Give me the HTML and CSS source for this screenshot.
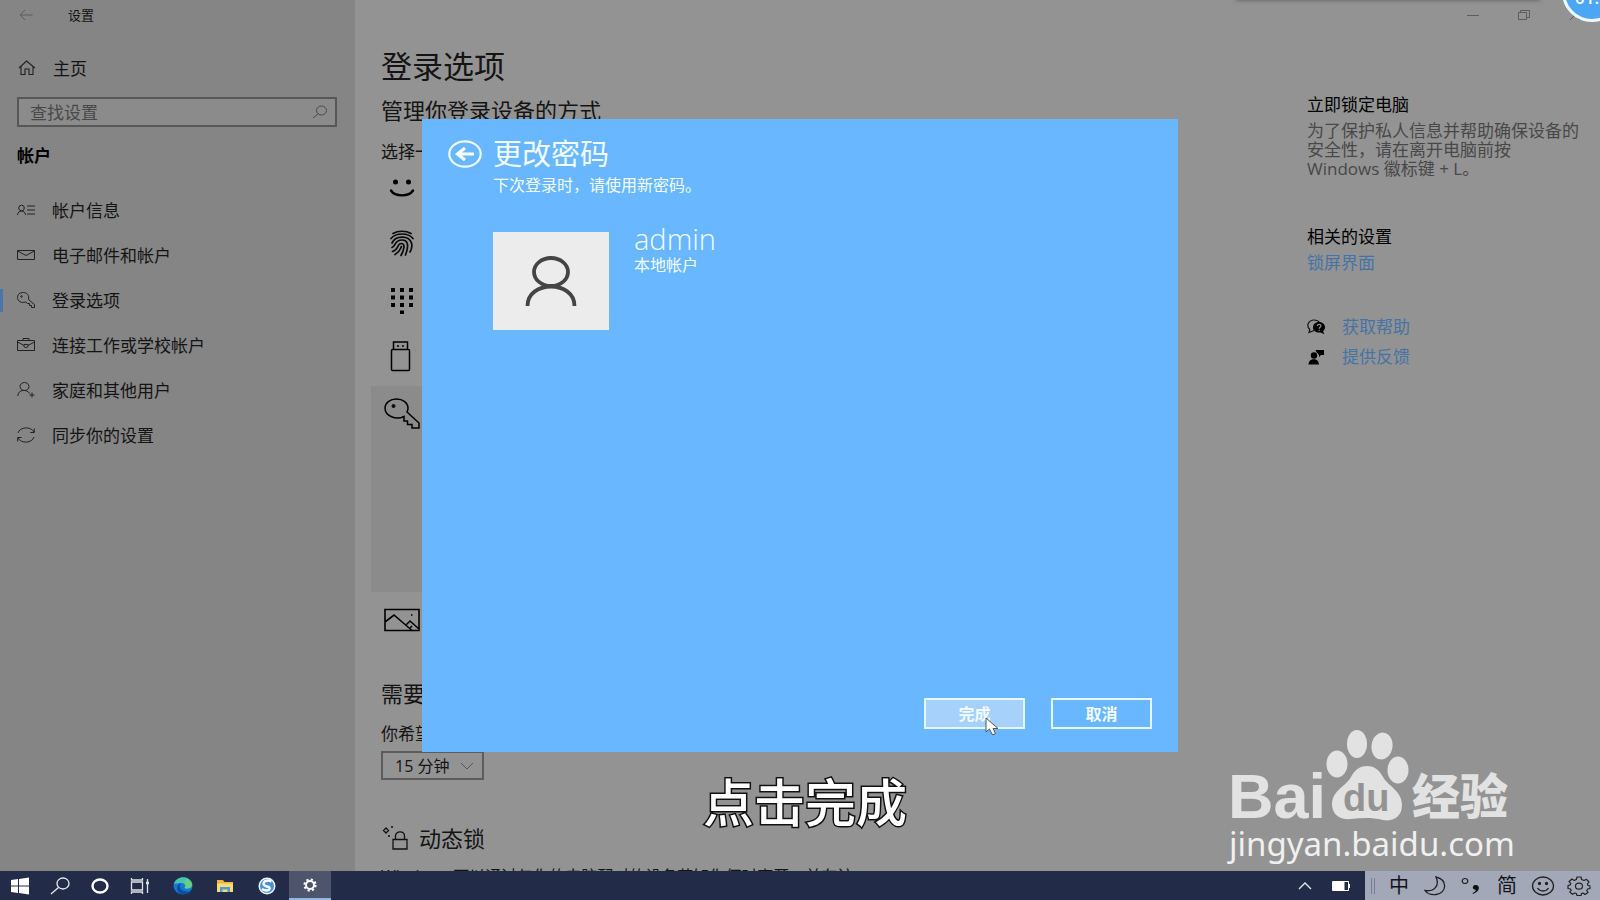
FILE: index.html
```html
<!DOCTYPE html>
<html lang="zh-CN">
<head>
<meta charset="utf-8">
<title>设置</title>
<link rel="stylesheet" href="styles.css">
</head>
<body>
<div class="desktop">
  <div class="window">
    <aside class="sidebar">
      <div class="titlebar">
        <button class="plain back" aria-label="后退"><svg width="14" height="12" viewBox="0 0 14 12"><path d="M13.500 6H1M6 1L1 6l5 5" fill="none" stroke="#5c5c5c"/></svg></button>
        <span>设置</span>
      </div>
      <a class="home" href="#">
        <svg width="18" height="16" viewBox="0 0 18 16"><path d="M1 8l7.500-7L17 8M3 6.500V14.500h4V9h4v5.500h4V6.500" fill="none" stroke="#222" stroke-width="1.100"/></svg>
        <span>主页</span>
      </a>
      <label class="search">
        <input type="text" placeholder="查找设置" aria-label="查找设置">
        <svg width="16" height="14" viewBox="0 0 16 14"><ellipse cx="9.500" cy="5.500" rx="5" ry="4.500" fill="none" stroke="#484848"/><path d="M6 9L1 13" stroke="#484848"/></svg>
      </label>
      <h2 class="group">帐户</h2>
      <nav class="nav">
        <a href="#"><svg width="18" height="16" viewBox="0 0 18 16" fill="none" stroke="#222"><circle cx="4.500" cy="6" r="2.800"/><path d="M.5 13c.3-5.200 7.700-5.200 8 0M10 4h8M10 8h8M10 12h8"/></svg><span>帐户信息</span></a>
        <a href="#"><svg width="18" height="16" viewBox="0 0 18 16" fill="none" stroke="#222"><path d="M.5 3.500h17v9H.500zM.5 4l8.500 4.500L17.500 4"/></svg><span>电子邮件和帐户</span></a>
        <a href="#" class="current"><svg width="18" height="16" viewBox="0 0 18 16" fill="none" stroke="#222"><path d="M11.500 7.500l6 5v3h-3v-2h-2v-2h-2l-2-1.500C4 11.500.500 9 .500 5.500S3 .500 6.500.500s6 3 5 7z"/><circle cx="4.500" cy="4.500" r=".8"/></svg><span>登录选项</span></a>
        <a href="#"><svg width="18" height="16" viewBox="0 0 18 16" fill="none" stroke="#222"><path d="M.5 3.500h17v10H.500zM6 3.500v-2h6v2M.5 5l6.500 3.500M17.500 5L11 8.500M7 7.500h4v1.500a2 1.500 0 0 1-4 0z"/></svg><span>连接工作或学校帐户</span></a>
        <a href="#"><svg width="18" height="16" viewBox="0 0 18 16" fill="none" stroke="#222"><ellipse cx="7.500" cy="4.500" rx="4.500" ry="4"/><path d="M.8 14c.3-7 9-7 12-2.500M15 10.500v5M12.500 13h5"/></svg><span>家庭和其他用户</span></a>
        <a href="#"><svg width="18" height="16" viewBox="0 0 18 16" fill="none" stroke="#222"><path d="M1 6C3-.5 14-.8 17 5M17 10c-2 6.500-13 6.800-16 1M17.300 1.500V5.500h-4M.7 14.500v-4h4"/></svg><span>同步你的设置</span></a>
      </nav>
    </aside>

    <div class="page">
      <div class="controls">
        <button class="plain" aria-label="最小化"><svg width="12" height="12" viewBox="0 0 12 12"><path d="M0 6.500h12" stroke="#5c5c5c"/></svg></button>
        <button class="plain" aria-label="还原"><svg width="12" height="10" viewBox="0 0 12 10" fill="none" stroke="#5c5c5c"><path d="M.5 2.500h8v7h-8zM2.500 2V.500h9v7H9"/></svg></button>
        <button class="plain" aria-label="关闭"><svg width="12" height="10" viewBox="0 0 12 10"><path d="M1 0l10 10M11 0L1 10" stroke="#5c5c5c"/></svg></button>
      </div>
      <div class="columns">
        <main class="content">
          <h1>登录选项</h1>
          <h2>管理你登录设备的方式</h2>
          <p class="choose">选择一</p>
          <ul class="methods">
            <li><svg width="40" height="36" viewBox="0 0 40 36"><circle cx="14.500" cy="12" r="2.500"/><circle cx="27.500" cy="12" r="2.500"/><path d="M10 20.500c4 6.500 18 6.500 22 0" fill="none" stroke="#000" stroke-width="2.400" stroke-linecap="round"/></svg></li>
            <li><svg width="40" height="36" viewBox="0 0 40 36" fill="none" stroke="#0a0a0a" stroke-width="1.700" stroke-linecap="round"><path d="M12 7.500c5-3 13-3 18 0M10 12.500c5-6 17-6 22 0M11 17c4-8 17-7.500 19.500 0 .8 3-.3 7-1.500 9M11 21.500c4-1 2-7.500 10-7.500 7 0 6.500 7.500 3.500 15M11.500 25.500c7-2 4-8 9-8 4.500 0 2 7.500-.5 12M14 28.500c5-2.500 5-5 6.500-8"/></svg></li>
            <li><svg width="40" height="36" viewBox="0 0 40 36"><path d="M10 6h4v4h-4zM19 6h4v4h-4zM28 6h4v4h-4zM10 13.500h4v4h-4zM19 13.500h4v4h-4zM28 13.500h4v4h-4zM10 21h4v4h-4zM19 21h4v4h-4zM28 21h4v4h-4zM19 28.500h4v3.500h-4z"/></svg></li>
            <li><svg width="40" height="36" viewBox="0 0 40 36" fill="none" stroke="#000" stroke-width="1.500"><path d="M12.500 11.500V4h14v7.500M11.500 11.500h16a1 1 0 0 1 1 1v19a1 1 0 0 1-1 1h-16a1 1 0 0 1-1-1v-19a1 1 0 0 1 1-1z"/><path d="M16 8h2M21 8h2"/></svg></li>
            <li class="selected"><svg width="40" height="36" viewBox="0 0 40 36" fill="none" stroke="#000" stroke-width="1.500"><path d="M26 17l12 11v5h-7v-3.500h-4.500V26H23v-4.500c-8 4-19-.5-19-8.500C4 8 9 4 15.500 4S27 8 27 13c0 1.500-.3 2.800-1 4z"/><circle cx="12.500" cy="11" r="1.500" fill="#000" stroke-width="1"/></svg></li>
            <li><svg width="40" height="36" viewBox="0 0 40 36" fill="none" stroke="#000" stroke-width="1.600"><path d="M4 7.500h34v21H4zM4 20l9-7 18 15.500M25 23l4-4 9 8M28 27l3-3"/><path d="M30 13h1.500"/></svg></li>
          </ul>
          <h2 class="require">需要</h2>
          <label class="hope" for="wait">你希望</label>
          <div class="select">
            <select id="wait"><option>15 分钟</option></select>
            <svg width="14" height="8" viewBox="0 0 14 8"><path d="M1 1l6 6 6-6" fill="none" stroke="#555"/></svg>
          </div>
          <h2 class="dynamic"><svg width="28" height="26" viewBox="0 0 28 26" fill="none" stroke="#111" stroke-width="1.300"><path d="M12 14.500h14v9.500H12zM14.500 14.500V11c0-5.500 9-5.500 9 0v3.500M5 3l2.500 2.500L5 8 2.500 5.500z"/><path d="M10 2h2M7 11h2"/></svg><span>动态锁</span></h2>
          <p class="dynamic-text">Windows 可以通过与你的电脑配对的设备获知你何时离开，并在该</p>
        </main>
        <aside class="related">
          <h3>立即锁定电脑</h3>
          <p>为了保护私人信息并帮助确保设备的安全性，请在离开电脑前按 Windows 徽标键 + L。</p>
          <h3 class="second">相关的设置</h3>
          <a href="#">锁屏界面</a>
          <ul>
            <li><svg width="18" height="16" viewBox="0 0 18 16"><path d="M7 11.500L2 13.500l.8-3C-1.500 6.500 2 1 7 1c2.500 0 4.500 1 5.500 2.500" fill="none" stroke="#111" stroke-width="1.200"/><path d="M12 3c3.500 0 6 2.300 6 5.200 0 1.800-.8 3-2 4l1.500 3-4-1.800C9 14 6 11.800 6 8.200 6 5.300 8.500 3 12 3z"/><path d="M10.500 7c0-2.200 3.500-2 3.500 0 0 1.500-1.800 1.200-1.800 2.700M12.200 10.800v1" fill="none" stroke="#939393" stroke-width="1.200"/></svg><a href="#">获取帮助</a></li>
            <li><svg width="18" height="16" viewBox="0 0 18 16"><circle cx="7" cy="6.500" r="3.200"/><path d="M1.500 15.500c0-7 10.500-7 10.500 0zM8.500 1H17v5h-3l-2 2V6L9.500 3z"/></svg><a href="#">提供反馈</a></li>
          </ul>
        </aside>
      </div>
    </div>
  </div>

  <footer class="taskbar">
    <div class="apps">
      <button class="plain" aria-label="开始"><svg width="20" height="18" viewBox="0 0 20 18"><path d="M1 3l7-1v6.500H1zM9 2l10-1.500v8H9zM1 9.500h7V16l-7-1zM9 9.500h10v8L9 16z" fill="#fff"/></svg></button>
      <button class="plain" aria-label="搜索"><svg width="20" height="18" viewBox="0 0 20 18" fill="none" stroke="#e8eaf0" stroke-width="1.300"><ellipse cx="13" cy="6.500" rx="6" ry="5.500"/><path d="M8.500 10.500L1 17"/></svg></button>
      <button class="plain" aria-label="语音助手"><svg width="20" height="18" viewBox="0 0 20 18"><ellipse cx="10" cy="9" rx="7.500" ry="6.500" fill="none" stroke="#fff" stroke-width="2.400"/></svg></button>
      <button class="plain" aria-label="任务视图"><svg width="20" height="18" viewBox="0 0 20 18" fill="none" stroke="#dfe2ea" stroke-width="1.300"><path d="M1.500 5h11v8h-11zM1.500 1v2h11V1M1.500 17v-2h11v2M17.500 2v14"/><path d="M16 6h3" stroke-width="2.500"/></svg></button>
      <button class="plain app edge" aria-label="浏览器"><svg width="20" height="18" viewBox="0 0 20 18"><ellipse cx="10" cy="9" rx="9.500" ry="8.500" fill="#1379d2"/><path d="M1 7C3-1.500 16-2 19 6c1.500 5-4 6.500-7.500 5 1.500-2 .5-5-3-5S2 7 1 7z" fill="#48c3b0"/><path d="M13 1.500c5 1.500 7.500 7 4.500 9-2 1.200-4.500 1-6 .5 1.500-2 1-4 0-5z" fill="#65cf83"/><path d="M8 6c-3 4-.5 9.500 9 8.500-3.500 4-12 4-13-3C4 8.500 6 6.500 8 6z" fill="#0b4f9e"/></svg></button>
      <button class="plain app" aria-label="文件资源管理器"><svg width="18" height="16" viewBox="0 0 18 16"><path d="M1 2h6l1.500 2H17v10H1z" fill="#e9b544"/><path d="M1 5.500h16V14H1z" fill="#fbd975"/><path d="M4 14V9h10v5h-2.500v-2.500h-5V14z" fill="#4aa0cc"/></svg></button>
      <button class="plain app" aria-label="搜狗浏览器"><svg width="18" height="18" viewBox="0 0 18 18"><circle cx="9" cy="9" r="8.500" fill="#eef6ff"/><circle cx="9" cy="9" r="7" fill="#4b91d9"/><path d="M13.500 4.500C9 2 4 5 6 8c1.500 2 6.500 1.200 5.500 4-.8 2-4.500 2-7.500 0" fill="none" stroke="#fff" stroke-width="2.500"/></svg></button>
      <button class="plain app active" aria-label="设置"><svg width="14" height="14" viewBox="0 0 14 14"><circle cx="7" cy="7" r="4" fill="none" stroke="#fff" stroke-width="2"/><circle cx="7" cy="7" r="5.600" fill="none" stroke="#fff" stroke-width="2" stroke-dasharray="2.200 2.200"/></svg></button>
    </div>
    <div class="tray">
      <button class="plain" aria-label="显示隐藏的图标"><svg width="14" height="8" viewBox="0 0 14 8"><path d="M1 7l6-6 6 6" fill="none" stroke="#e8eaf0" stroke-width="1.300"/></svg></button>
      <button class="plain" aria-label="电池"><svg width="18" height="10" viewBox="0 0 18 10"><path d="M.5.500h16v9H.500z" fill="none" stroke="#fff"/><path d="M1 1h11.500v8H1zM17 3h1v4h-1z" fill="#fff"/></svg></button>
    </div>
    <div class="ime">
      <svg class="grip" width="6" height="16" viewBox="0 0 6 16"><path d="M1.500 0v16M4.500 0v16" stroke="#777e8e"/></svg>
      <button class="plain">中</button>
      <button class="plain" aria-label="半角"><svg width="22" height="20" viewBox="0 0 22 20"><path d="M12 1c12 3 11 16 0 17.500-4.500.500-9-1-11-4C10 16 16 10 12 1z" fill="none" stroke="#222" stroke-width="1.300"/></svg></button>
      <button class="plain" aria-label="标点"><svg width="20" height="18" viewBox="0 0 20 18"><ellipse cx="4" cy="4" rx="2.800" ry="2.500" fill="none" stroke="#222" stroke-width="1.200"/><path d="M14 8c5-.8 6 6-2 9l-.5-1c2.500-1 3.500-2 3.300-3.200C11 13 11 8.500 14 8z" fill="#111"/></svg></button>
      <button class="plain">简</button>
      <button class="plain" aria-label="表情"><svg width="24" height="20" viewBox="0 0 24 20" fill="none" stroke="#222" stroke-width="1.300"><ellipse cx="12" cy="10" rx="10.500" ry="9"/><path d="M6.500 12c2.500 4 8.500 4 11 0"/><circle cx="8.500" cy="7.500" r="1" fill="#222"/><circle cx="15.500" cy="7.500" r="1" fill="#222"/></svg></button>
      <button class="plain" aria-label="输入法设置"><svg width="24" height="20" viewBox="-12 -10 24 20" fill="none" stroke="#222" stroke-width="1.200" stroke-linejoin="round"><path d="M-2-9h4l.6 2.500L5-5.500l2.500-1.200L10-4 8.400-2l.4 1.300L11 0v2.500L8.600 3l-.8 1.500L9 6.500 6 8.500 4 7l-1.500.6L2 9.500h-4l-.6-2L-4.200 7-6.500 8.300-9.200 6l1.400-1.800L-8.500 3-11 2.500V-.5l2.300-.6.500-1.300L-10-4.300-7.200-7l2.500 1.400 2-.9z"/><ellipse cx="0" cy=".2" rx="3.500" ry="3"/></svg></button>
    </div>
  </footer>

  <section class="dialog" role="dialog" aria-labelledby="dialog-title">
    <header>
      <button class="plain" aria-label="返回"><svg width="34" height="28" viewBox="0 0 34 28"><ellipse cx="17" cy="14" rx="15.700" ry="12.700" fill="none" stroke="#f0fbff" stroke-width="2.200"/><path d="M26 14H10M17 8l-7.500 6 7.500 6" fill="none" stroke="#f4fdff" stroke-width="3.200"/></svg></button>
      <h1 id="dialog-title">更改密码</h1>
    </header>
    <p class="hint">下次登录时，请使用新密码。</p>
    <div class="account">
      <div class="avatar"><svg width="54" height="52" viewBox="0 0 54 52" fill="none" stroke="#444" stroke-width="3.800"><ellipse cx="27" cy="17" rx="17" ry="14"/><path d="M3.500 51c0-26 47-26 47 0"/></svg></div>
      <div class="who"><strong>admin</strong><span>本地帐户</span></div>
    </div>
    <div class="actions">
      <button class="primary">完成</button>
      <button>取消</button>
    </div>
  </section>

  <svg class="cursor" width="15" height="20" viewBox="0 0 15 20"><path d="M1 1v14l3.500-3 3 6 3-1.500-2.500-5H13z" fill="#fff" stroke="#555"/></svg>
  <p class="caption">点击完成</p>

  <svg class="watermark" width="290" height="150" viewBox="0 0 290 150" fill="#e2e2e2">
    <text class="logo" x="3" y="93">Bai</text>
    <ellipse cx="112" cy="39" rx="10.500" ry="13.500"/>
    <ellipse cx="132" cy="19" rx="10" ry="14"/>
    <ellipse cx="157" cy="21" rx="10.500" ry="13.500" transform="rotate(8 157 21)"/>
    <ellipse cx="173" cy="45" rx="10.500" ry="13.500"/>
    <path d="M142 41c8 0 12 4 16 11 5 9 19 14 19 28 0 11-8 17-19 15-12-3-22-2-32-1-11 1-19-4-19-15 0-13 14-18 19-27 4-7 8-11 16-11z"/>
    <text class="du" x="118" y="86">du</text>
    <text class="jingyan" x="187" y="89">经验</text>
    <text class="site" x="4" y="131">jingyan.baidu.com</text>
  </svg>

  <div class="strip"></div>
  <div class="timer">01:0</div>
</div>
</body>
</html>
```
FILE: styles.css
```css
* { box-sizing: border-box; }

body,
h1,
h2,
h3,
p,
ul {
  margin: 0;
  padding: 0;
}

body {
  font-family: "Open Sans", "Noto Sans CJK SC", sans-serif;
  font-size: 17px;
  color: #141414;
  overflow: hidden;
}

h1, h2, h3 { font-weight: 400; }
ul { list-style: none; }
a { color: inherit; text-decoration: none; }
svg { display: block; flex: none; }

button,
input,
select {
  font: inherit;
  color: inherit;
}

.plain {
  display: flex;
  align-items: center;
  justify-content: center;
  padding: 0;
  border: 0;
  background: none;
}

.desktop {
  position: relative;
  display: flex;
  flex-direction: column;
  height: 100vh;
  overflow: hidden;
}

.window {
  display: flex;
  flex: 1;
  min-height: 0;
  overflow: hidden;
  background: #939393;
}

/* Sidebar */
.sidebar {
  flex: 0 0 355px;
  background: #858585;
}

.titlebar {
  display: flex;
  align-items: center;
  gap: 35px;
  height: 30px;
  padding-left: 19px;
  font-size: 13px;
}

.titlebar span,
.home span { padding-bottom: 2px; }

.home {
  display: flex;
  align-items: center;
  gap: 17px;
  height: 36px;
  margin-top: 20px;
  padding-left: 18px;
}

.search {
  display: flex;
  align-items: center;
  height: 30px;
  margin: 11px 18px 0 17px;
  padding: 0 7px 0 11px;
  border: 2px solid #575757;
  background: #8b8b8b;
}

.search input {
  flex: 1;
  min-width: 0;
  padding: 0;
  border: 0;
  outline: 0;
  background: none;
}

.search input::placeholder { color: #484848; opacity: 1; }

.group {
  margin: 17px 0 0 17px;
  font-size: 17px;
  line-height: 24px;
  font-weight: 700;
  color: #000;
}

.nav { margin-top: 19px; }

.nav a {
  position: relative;
  display: flex;
  align-items: center;
  gap: 17px;
  height: 45px;
  padding-left: 17px;
}

.nav .current::before {
  content: "";
  position: absolute;
  left: 0;
  top: 12px;
  width: 3px;
  height: 23px;
  background: #4a76a8;
}

/* Settings page */
.page {
  display: flex;
  flex: 1;
  flex-direction: column;
  min-width: 0;
}

.controls {
  display: flex;
  justify-content: flex-end;
  height: 30px;
}

.controls button { width: 51px; }

.columns {
  display: flex;
  flex: 1;
  min-height: 0;
}

.content {
  flex: 1;
  min-width: 0;
  padding: 16px 0 0 26px;
}

.content h1 { font-size: 31px; line-height: 40px; }
.content h2 { font-size: 22px; line-height: 30px; margin-top: 9px; }
.content .choose { margin-top: 19px; line-height: 16px; }

.methods { margin-left: -10px; }

.methods li {
  display: flex;
  align-items: center;
  height: 56px;
  padding-left: 10px;
}

.methods .selected {
  align-items: flex-start;
  width: 50%;
  height: 206px;
  margin-top: 2px;
  padding-top: 9px;
  background: #8b8b8b;
}

.content .require { margin-top: 30px; }
.hope { display: block; margin-top: 16px; line-height: 20px; }

.select {
  display: flex;
  align-items: center;
  width: 103px;
  height: 29px;
  margin-top: 7px;
  padding-right: 8px;
  border: 2px solid #5c5c5c;
}

.select select {
  flex: 1;
  min-width: 0;
  padding: 0 0 0 12px;
  border: 0;
  background: none;
  appearance: none;
  font-size: 16px;
}

.content .dynamic {
  display: flex;
  align-items: center;
  gap: 10px;
  margin-top: 43px;
}

.dynamic-text {
  margin-top: 13px;
  font-size: 16px;
  line-height: 20px;
  white-space: nowrap;
}

/* Related links */
.related { flex: 0 0 293px; padding: 63px 18px 0 0; }

.related h3 { font-size: 17px; line-height: 24px; color: #000; }
.related p { margin-top: 4px; line-height: 19px; color: #484848; }
.related .second { margin-top: 47px; }

.related a {
  display: block;
  margin-top: 2px;
  line-height: 24px;
  color: #4673a5;
}

.related ul { margin-top: 37px; }

.related li {
  display: flex;
  align-items: center;
  gap: 17px;
  height: 30px;
}

.related li a { margin: 0; }

/* Password dialog */
.dialog {
  position: absolute;
  inset: 119px 422px 148px;
  display: flex;
  flex-direction: column;
  padding: 15px 26px 23px;
  background: #69b8ff;
  color: #f2fcff;
}

.dialog header {
  display: flex;
  align-items: center;
  gap: 11px;
}

.dialog h1 { font-size: 29px; line-height: 40px; }

.hint {
  margin: 1px 0 0 45px;
  font-size: 16px;
  line-height: 20px;
}

.account {
  display: flex;
  gap: 25px;
  margin: 37px 0 0 45px;
}

.avatar {
  display: flex;
  align-items: center;
  justify-content: center;
  width: 116px;
  height: 98px;
  background: #ececec;
}

.who { margin-top: -9px; }

.who strong {
  display: block;
  font-size: 29px;
  line-height: 32px;
  font-weight: 300;
}

.who span {
  display: block;
  font-size: 16px;
  line-height: 20px;
}

.actions {
  display: flex;
  justify-content: flex-end;
  gap: 26px;
  margin-top: auto;
}

.actions button {
  width: 101px;
  height: 31px;
  padding: 0;
  border: 2px solid #e4f7fd;
  background: none;
  font-size: 16px;
  font-weight: 700;
  line-height: 20px;
}

.actions .primary { background: #a5d1fb; }

/* Recording overlays */
.cursor { position: absolute; left: 985px; top: 717px; }

.caption {
  position: absolute;
  left: 703px;
  top: 772px;
  font-size: 51px;
  line-height: 60px;
  font-weight: 500;
  color: #fff;
  -webkit-text-stroke: 3px #111;
  paint-order: stroke fill;
}

.watermark { position: absolute; left: 1225px; top: 725px; }
.logo { font: 700 63px "Liberation Sans", sans-serif; }
.du { font: 700 38px "Liberation Sans", sans-serif; fill: #939393; }
.jingyan { font: 900 48px "Noto Sans CJK SC", sans-serif; }
.site { font: 400 33px "Noto Sans", sans-serif; fill: #f0f0f0; }

.strip {
  position: absolute;
  top: -4px;
  right: 60px;
  width: 304px;
  height: 4px;
  box-shadow: 0 0 4px #555;
}

.timer {
  position: absolute;
  top: -38px;
  right: -22px;
  width: 60px;
  height: 60px;
  border: 3px solid #eafaff;
  border-radius: 50%;
  background: #4ba6f5;
  color: #fff;
  font-size: 17px;
  font-weight: 600;
  line-height: 66px;
  text-align: center;
}

/* Taskbar */
.taskbar {
  display: flex;
  flex: 0 0 29px;
  background: #222b47;
}

.apps { display: flex; flex: 1; }
.apps button { width: 40px; }
.apps .app { width: 42px; }
.apps .edge { margin-left: 2px; }
.apps .active { margin-left: 1px; background: #4d546b; border-bottom: 2px solid #8fb7e6; }

.tray { display: flex; padding-right: 6px; }
.tray button { width: 36px; }

.ime {
  display: flex;
  align-items: center;
  flex: 0 0 235px;
  background: #a2a8b8;
}

.grip { margin: 0 5px; }
.ime button { width: 36px; font-size: 20px; line-height: 29px; }
```
